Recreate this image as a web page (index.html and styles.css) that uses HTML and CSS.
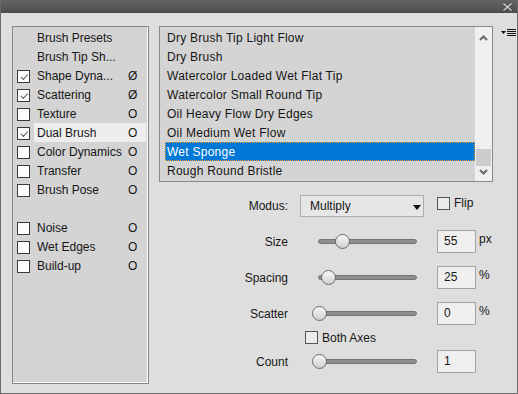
FILE: index.html
```html
<!DOCTYPE html>
<html lang="en">
<head>
  <meta charset="UTF-8">
  <title>Dual Brush</title>
  <link rel="stylesheet" href="styles.css">
</head>
<body>
  <div class="window">
    <div class="titlebar">
      <svg class="close" width="9" height="8" viewBox="0 0 9 8"><path d="M0.5 0.5 L8.5 7.5 M8.5 0.5 L0.5 7.5" stroke="#d6d6d6" stroke-width="1.1" fill="none"/></svg>
    </div>

    <div class="content">
      <div class="sidebar">
        <div class="row"><span class="box none"></span><span class="name">Brush Presets</span></div>
        <div class="row"><span class="box none"></span><span class="name">Brush Tip Sh...</span></div>
        <div class="row"><span class="box checked"></span><span class="name">Shape Dyna...<span class="lock">Ø</span></span></div>
        <div class="row"><span class="box checked"></span><span class="name">Scattering<span class="lock">Ø</span></span></div>
        <div class="row"><span class="box"></span><span class="name">Texture<span class="lock">O</span></span></div>
        <div class="row"><span class="box checked"></span><span class="name active">Dual Brush<span class="lock">O</span></span></div>
        <div class="row"><span class="box"></span><span class="name">Color Dynamics<span class="lock">O</span></span></div>
        <div class="row"><span class="box"></span><span class="name">Transfer<span class="lock">O</span></span></div>
        <div class="row"><span class="box"></span><span class="name">Brush Pose<span class="lock">O</span></span></div>
        <div class="row"></div>
        <div class="row"><span class="box"></span><span class="name">Noise<span class="lock">O</span></span></div>
        <div class="row"><span class="box"></span><span class="name">Wet Edges<span class="lock">O</span></span></div>
        <div class="row"><span class="box"></span><span class="name">Build-up<span class="lock">O</span></span></div>
      </div>

      <div class="main">
        <div class="top">
          <div class="list">
            <div class="items">
              <div class="item">Dry Brush Tip Light Flow</div>
              <div class="item">Dry Brush</div>
              <div class="item">Watercolor Loaded Wet Flat Tip</div>
              <div class="item">Watercolor Small Round Tip</div>
              <div class="item">Oil Heavy Flow Dry Edges</div>
              <div class="item">Oil Medium Wet Flow</div>
              <div class="item selected">Wet Sponge</div>
              <div class="item">Rough Round Bristle</div>
            </div>
            <div class="scrollbar">
              <svg class="arrow" width="9" height="6" viewBox="0 0 9 6"><path d="M1 5 L4.5 1.5 L8 5" stroke="#6a6a6a" stroke-width="2" fill="none"/></svg>
              <div class="track"><div class="thumb"></div></div>
              <svg class="arrow" width="9" height="6" viewBox="0 0 9 6"><path d="M1 1 L4.5 4.5 L8 1" stroke="#6a6a6a" stroke-width="2" fill="none"/></svg>
            </div>
          </div>
          <svg class="menu" width="15" height="8" viewBox="0 0 15 8">
            <path d="M0 2 H5 L2.5 5 Z" fill="#111"/>
            <rect x="6" y="0" width="9" height="1" fill="#111"/>
            <rect x="6" y="2" width="9" height="1" fill="#111"/>
            <rect x="6" y="4" width="9" height="1" fill="#111"/>
            <rect x="6" y="6" width="9" height="1" fill="#111"/>
          </svg>
        </div>

        <div class="controls">
          <div class="ctrl modus">
            <span class="label">Modus:</span>
            <div class="select">Multiply<span class="caret"></span></div>
            <div class="check flip"><span class="cb"></span>Flip</div>
          </div>

          <div class="ctrl">
            <span class="label">Size</span>
            <div class="slider"><div class="rail"></div><div class="knob" style="left: 24px"></div></div>
            <div class="field">55</div>
            <span class="unit">px</span>
          </div>

          <div class="ctrl">
            <span class="label">Spacing</span>
            <div class="slider"><div class="rail"></div><div class="knob" style="left: 10px"></div></div>
            <div class="field">25</div>
            <span class="unit">%</span>
          </div>

          <div class="ctrl">
            <span class="label">Scatter</span>
            <div class="slider"><div class="rail"></div><div class="knob" style="left: 1px"></div></div>
            <div class="field">0</div>
            <span class="unit">%</span>
          </div>

          <div class="check axes"><span class="cb"></span>Both Axes</div>

          <div class="ctrl count">
            <span class="label">Count</span>
            <div class="slider"><div class="rail"></div><div class="knob" style="left: 1px"></div></div>
            <div class="field">1</div>
          </div>
        </div>
      </div>
    </div>
  </div>
</body>
</html>
```

FILE: styles.css
```css
body {
  margin: 0;
  background: #dedede;
  font-family: 'Liberation Sans', Arial, sans-serif;
  font-size: 12px;
  color: #161616;
}
.window {
  width: 518px;
  height: 394px;
  box-sizing: border-box;
  background: #dedede;
  border: 1px solid #6a6a6a;
  border-top: none;
  display: flex;
  flex-direction: column;
}
.titlebar {
  height: 13px;
  flex: none;
  background: linear-gradient(#646464, #4c4c4c);
  display: flex;
  justify-content: flex-end;
  align-items: center;
  padding-right: 5px;
}
.close {
  display: block;
}
.content {
  display: flex;
  padding: 13px 0 0 11px;
}

/* left option list */
.sidebar {
  width: 137px;
  height: 358px;
  box-sizing: border-box;
  background: #d4d4d4;
  border: 1px solid #85878b;
  box-shadow: inset -1px -1px 0 #fbfbfb;
  padding: 1px 2px 0 4px;
}
.row {
  height: 19px;
  display: flex;
  align-items: center;
}
.box {
  width: 11px;
  height: 11px;
  border: 1px solid #3a3a3a;
  background: #fdfdfd;
  flex: none;
  margin-top: 2px;
  position: relative;
}
.box.none {
  visibility: hidden;
}
.box.checked::after {
  content: "";
  position: absolute;
  left: 2px;
  top: 1px;
  width: 6px;
  height: 3px;
  border-left: 1px solid #5a5a5a;
  border-bottom: 1px solid #5a5a5a;
  transform: rotate(-48deg) translate(-1px, 2px);
}
.name {
  flex: 1;
  height: 19px;
  box-sizing: border-box;
  padding-top: 1px;
  line-height: 19px;
  margin-left: 4px;
  padding-left: 3px;
  display: flex;
  justify-content: space-between;
  padding-right: 8px;
}
.name.active {
  background: #eeeeee;
}
.lock {
  width: 10px;
}

/* preset list */
.main {
  margin-left: 10px;
}
.top {
  display: flex;
  align-items: flex-start;
}
.list {
  width: 334px;
  height: 156px;
  box-sizing: border-box;
  background: #d4d4d4;
  border: 1px solid #8a8a8c;
  display: flex;
  padding-top: 1px;
}
.items {
  flex: 1;
  padding-left: 5px;
}
.item {
  height: 19px;
  line-height: 17px;
  box-sizing: border-box;
  border: 1px solid transparent;
  padding: 1px 0 0 1px;
  letter-spacing: 0.25px;
}
.item.selected {
  background: #0078d7;
  color: #fff;
  border: 1px dotted #f39a2c;
}
.scrollbar {
  width: 17px;
  background: #f0f0f0;
  display: flex;
  flex-direction: column;
  align-items: center;
  margin-top: -1px;
}
.arrow {
  margin: 8px 0 5px;
  flex: none;
}
.scrollbar .arrow:last-child {
  margin: 3px 0 6px;
}
.track {
  flex: 1;
  width: 100%;
  display: flex;
  flex-direction: column;
  justify-content: flex-end;
}
.thumb {
  height: 17px;
  margin: 0 1px;
  background: #cdcdcd;
}
.menu {
  margin: 3px 0 0 8px;
}

/* parameter controls */
.controls {
  padding-top: 13px;
}
.ctrl {
  display: flex;
  align-items: center;
  height: 23px;
  margin-bottom: 13px;
}
.label {
  width: 129px;
  text-align: right;
  flex: none;
}
.modus {
  height: 22px;
  align-items: flex-start;
}
.modus .label {
  line-height: 22px;
}
.select {
  width: 124px;
  height: 22px;
  box-sizing: border-box;
  margin-left: 12px;
  border: 1px solid #adadad;
  background: #e6e6e6;
  line-height: 21px;
  padding-left: 9px;
  position: relative;
}
.caret {
  position: absolute;
  right: 2px;
  top: 9px;
  border-left: 4.5px solid transparent;
  border-right: 4.5px solid transparent;
  border-top: 5px solid #111;
}
.check {
  display: flex;
  align-items: center;
}
.cb {
  width: 11px;
  height: 11px;
  border: 1px solid #555;
  background: #ebebeb;
  margin-right: 4px;
}
.flip {
  margin: 1px 0 0 13px;
}
.slider {
  width: 107px;
  height: 16px;
  margin-left: 23px;
  position: relative;
}
.rail {
  position: absolute;
  left: 7px;
  right: 1px;
  top: 5px;
  height: 5px;
  box-sizing: border-box;
  background: #8e8e8e;
  border: 1px solid #727272;
  border-radius: 3px;
}
.knob {
  position: absolute;
  top: 0;
  width: 15px;
  height: 15px;
  box-sizing: border-box;
  border: 1px solid #6c6c6c;
  border-radius: 50%;
  background: linear-gradient(#f8f8f8, #cfcfcf);
}
.field {
  width: 39px;
  height: 23px;
  box-sizing: border-box;
  margin-left: 19px;
  border: 1px solid #a3a3a3;
  background: #efefef;
  padding-left: 6px;
  line-height: 21px;
}
.unit {
  margin-left: 3px;
  align-self: flex-start;
  line-height: 18px;
}
.axes {
  margin: -7px 0 0 146px;
  height: 13px;
}
.count {
  margin-top: 6px;
}
```
